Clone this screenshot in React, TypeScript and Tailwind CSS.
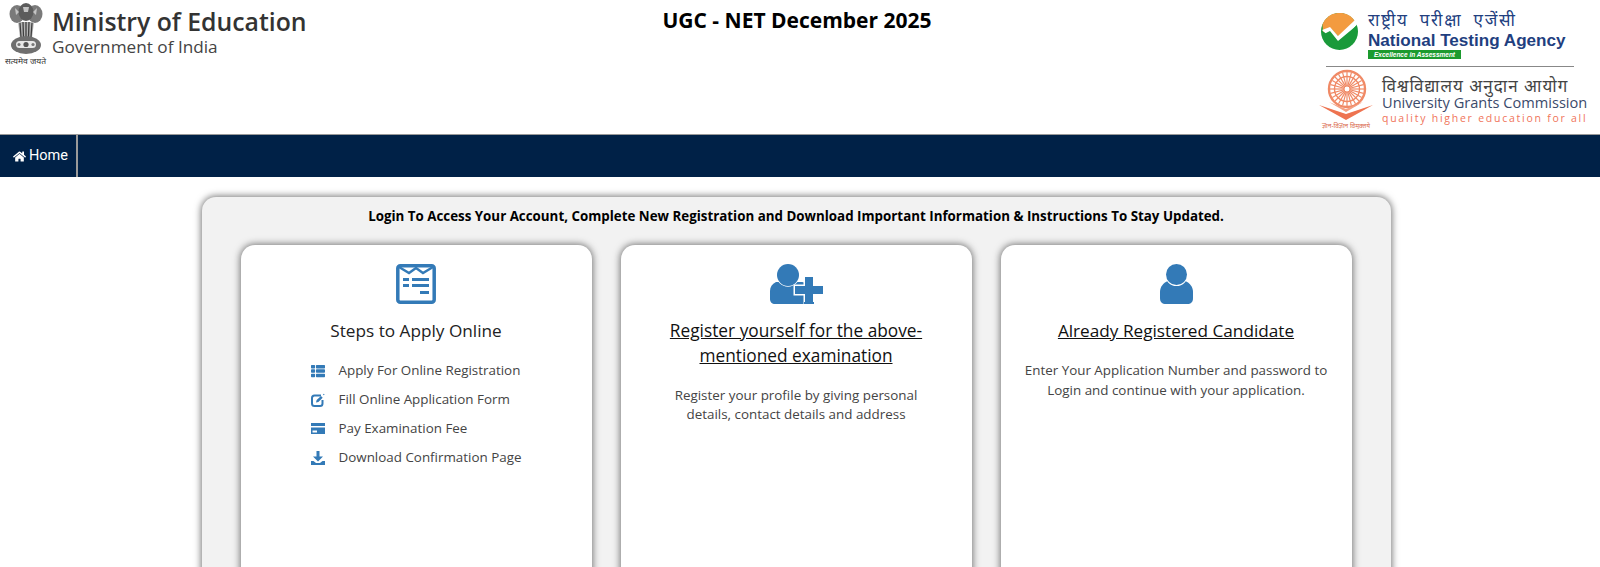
import React from "react";
import { FaHome, FaThList } from "react-icons/fa";

const openSans = "font-['Open_Sans',sans-serif]";
const hindi = "font-['Noto_Sans_Devanagari','Noto_Sans','Lohit_Devanagari',sans-serif]";

function Emblem() {
  return (
    <svg width="34" height="52" viewBox="0 0 34 52" className="block">
      <g fill="#7a7a7a">
        <ellipse cx="8" cy="11" rx="7.5" ry="9" />
        <ellipse cx="26" cy="11" rx="7.5" ry="9" />
        <ellipse cx="17" cy="9" rx="7.5" ry="9" fill="#5c5c5c" />
        <path d="M6 5l4 4-3 3zM28 5l-4 4 3 3zM14 4h6l-1 5h-4z" fill="#c4c4c4" />
        <path d="M9 19h16l-2 16H11Z" fill="#b5b5b5" />
        <path d="M11 20l1 14M14 19l.5 15M17 19v15M20 19l-.5 15M23 20l-1 14" stroke="#3f3f3f" strokeWidth="1.3" />
        <ellipse cx="17" cy="42" rx="15" ry="9" fill="#6f6f6f" />
        <rect x="7" y="38" width="20" height="7" rx="3.5" fill="#e8e8e8" />
        <circle cx="17" cy="41.5" r="2.6" fill="#555" />
        <circle cx="10" cy="41.5" r="1.6" fill="#777" />
        <circle cx="24" cy="41.5" r="1.6" fill="#777" />
      </g>
    </svg>
  );
}

function NtaLogo() {
  return (
    <svg width="37" height="37" viewBox="0 0 37 37" className="block shrink-0">
      <circle cx="18.5" cy="18.5" r="18.5" fill="#1a9a3a" />
      <path d="M1.4 11.5A18.5 18.5 0 0 1 34.5 9L18 24 10.5 16 2 19Z" fill="#f39b3f" />
      <path d="M1 17l8-3 8 9L34 7l2.4 4L18 33Z" fill="#fff" />
      <path d="M3 21l6-3 8 10L35 13c-1 10-8 22-16.500 22C10 35 4 29 3 21Z" fill="#1a9a3a" />
    </svg>
  );
}

function UgcLogo() {
  const spokes = Array.from({ length: 24 }, (_, i) => (i * 360) / 24);
  return (
    <svg width="54" height="60" viewBox="0 0 54 60" className="block shrink-0">
      <g fill="none" stroke="#f08a66">
        <circle cx="28" cy="20" r="18" strokeWidth="2.4" />
        <circle cx="28" cy="20" r="12.500" strokeWidth="1.4" />
        {spokes.map((a) => (
          <line key={a} x1="28" y1="3" x2="28" y2="17" strokeWidth="1.2" transform={`rotate(${a} 28 20)`} />
        ))}
      </g>
      <circle cx="28" cy="20" r="3" fill="#fff" stroke="#f08a66" />
      <path d="M0 36l27 9 27-9-27 15Z" fill="#ee7350" />
      <path d="M10 33l17 7 17-7-17 10Z" fill="#f4a083" />
      <text x="27" y="58.500" textAnchor="middle" fontSize="6.5" fill="#d9694c" fontFamily="'Noto Sans',sans-serif">ज्ञान-विज्ञान विमुक्तये</text>
    </svg>
  );
}

function StepsIcon() {
  return (
    <svg width="40" height="40" viewBox="0 0 40 40" className="block">
      <rect x="1.800" y="1.800" width="36.400" height="36.400" rx="2.500" fill="none" stroke="#337ab7" strokeWidth="3.500" />
      <path d="M3 3l10 6 7-5 7 5 10-6" fill="none" stroke="#337ab7" strokeWidth="2.400" />
      <g fill="#337ab7">
        <rect x="7" y="14" width="6" height="3" />
        <rect x="16" y="14" width="17" height="3" />
        <rect x="7" y="20" width="6" height="3" />
        <rect x="16" y="20" width="17" height="3" />
        <rect x="24" y="27" width="9" height="3" />
      </g>
    </svg>
  );
}

function UserPlusIcon() {
  return (
    <svg width="53" height="40" viewBox="0 0 53 40" className="block">
      <path d="M6 18h26c4 0 7 4 7 9v13H5c-3 0-5-2-5-5v-8c0-4 2-7 6-9Z" fill="#337ab7" />
      <circle cx="18" cy="11" r="11" fill="#337ab7" stroke="#fff" strokeWidth="1.500" paintOrder="stroke" />
      <path d="M35 13h8v9h10v8H43v10h-8V30H25v-8h10Z" fill="#337ab7" stroke="#fff" strokeWidth="3" paintOrder="stroke" />
      <path d="M34 40h10v-2h-10Z" fill="#337ab7" />
    </svg>
  );
}

function UserIcon() {
  return (
    <svg width="33" height="40" viewBox="0 0 33 40" className="block">
      <path d="M8 17h17c5 2 8 6 8 11v6c0 4-2 6-6 6H6c-4 0-6-2-6-6v-6c0-5 3-9 8-11Z" fill="#337ab7" />
      <circle cx="16.500" cy="10.500" r="10.500" fill="#337ab7" stroke="#fff" strokeWidth="2" paintOrder="stroke" />
    </svg>
  );
}

function EditIcon() {
  return (
    <svg width="14" height="14" viewBox="0 0 14 14" className="block">
      <path d="M10 2.500H3.500C2 2.500 1 3.500 1 5v5.500C1 12 2 13 3.500 13H9c1.500 0 2.500-1 2.500-2.500V7" fill="none" stroke="#337ab7" strokeWidth="2" />
      <path d="M5 9.500l.6-2.400L10 3l1.700 1.700L7.400 8.900Z" fill="#337ab7" />
      <path d="M12 1.500l.8-.8.8.8-.8.8Z" fill="#337ab7" />
    </svg>
  );
}

function CardIcon() {
  return (
    <svg width="14" height="11" viewBox="0 0 14 11" className="block">
      <path d="M0 0h14v3H0Z" fill="#337ab7" />
      <path d="M0 4.500h14V11H0Zm1.500 3V9.500h4.500V7.500Z" fill="#337ab7" fillRule="evenodd" />
    </svg>
  );
}

function DownloadIcon() {
  return (
    <svg width="14" height="14" viewBox="0 0 14 14" className="block">
      <path d="M5.500 0h3v5.500H12L7 10.500 2 5.500h3.500Z" fill="#337ab7" />
      <path d="M0 10h2.500l2.500 2h4l2.500-2H14v4H0Z" fill="#337ab7" />
    </svg>
  );
}

const steps = [
  { icon: <FaThList />, label: "Apply For Online Registration" },
  { icon: <EditIcon />, label: "Fill Online Application Form" },
  { icon: <CardIcon />, label: "Pay Examination Fee" },
  { icon: <DownloadIcon />, label: "Download Confirmation Page" },
];

function Card({ icon, children }: { icon: React.ReactNode; children: React.ReactNode }) {
  return (
    <div className="bg-white rounded-[14px] shadow-[0_0_7px_1px_#777] h-[420px] pt-[19px] px-5 flex flex-col items-center text-center">
      <div className="h-10 flex justify-center">{icon}</div>
      {children}
    </div>
  );
}

export default function App() {
  return (
    <div className={`h-screen overflow-hidden bg-white ${openSans}`}>
      <header className="h-[134px] flex">
        <div className="w-[330px] flex pl-1 pt-[3px]">
          <div className="w-[43px] flex flex-col items-center">
            <Emblem />
            <span className={`mt-[2px] text-[8.500px] leading-[9px] text-[#333] whitespace-nowrap ${hindi}`}>सत्यमेव जयते</span>
          </div>
          <div className="pl-[5px] pt-[3px]">
            <div className="text-[24.800px] leading-[31px] font-semibold text-[#333]">Ministry of Education</div>
            <div className="text-[17.200px] leading-[20px] text-[#444]">Government of India</div>
          </div>
        </div>
        <h1 className="flex-1 text-center text-[21px] leading-[28px] pt-[6px] font-bold text-black">UGC - NET December 2025</h1>
        <div className="w-[336px] pl-[57px] pt-[13px]">
          <div className="flex gap-[10px] h-[50px]">
            <NtaLogo />
            <div>
              <div className={`pt-[2px] text-[17px] leading-[15px] tracking-[1.700px] [word-spacing:5px] text-[#22407f] whitespace-nowrap ${hindi}`}>राष्ट्रीय परीक्षा एजेंसी</div>
              <div className="font-['Liberation_Sans',sans-serif] font-bold text-[17.100px] leading-[21px] text-[#1f3f7f]">National Testing Agency</div>
              <div className="font-['Liberation_Sans',sans-serif] -mt-px w-[93px] h-[9px] bg-[#1c9a2e] text-white text-[6.500px] leading-[9px] italic font-bold text-center">Excellence in Assessment</div>
            </div>
          </div>
          <div className="mt-[3px] ml-[5px] w-[248px] h-px bg-[#888]" />
          <div className="flex gap-[9px] -ml-[2px] mt-[2px]">
            <UgcLogo />
            <div className="pt-[15px]">
              <div className={`text-[17px] leading-[9px] tracking-[1px] text-[#444] whitespace-nowrap ${hindi}`}>विश्वविद्यालय अनुदान आयोग</div>
              <div className="text-[14.600px] leading-[18px] text-[#3b4a6b] whitespace-nowrap">University Grants Commission</div>
              <div className="text-[10.500px] leading-[14px] tracking-[1.750px] font-medium text-[#f0745a] whitespace-nowrap">quality higher education for all</div>
            </div>
          </div>
        </div>
      </header>

      <nav className="h-[43px] bg-[#002147] flex border-t border-t-[#999]">
        <a className="flex items-center gap-[3px] pl-[13px] pr-2 border-r-2 border-r-[#9a9a9a] text-white text-[14.500px] font-['Roboto',sans-serif]">
          <FaHome className="text-[13px]" />
          Home
        </a>
      </nav>

      <main className="pt-5 pr-2 flex justify-center">
        <section className="w-[1189px] bg-[#f2f2f2] rounded-[14px] shadow-[0_0_7px_1px_#777] px-[39px] pt-[10px]">
          <p className="text-[13.350px] leading-[18px] font-bold text-black text-center">
            Login To Access Your Account, Complete New Registration and Download Important Information &amp; Instructions To Stay Updated.
          </p>
          <div className="grid grid-cols-3 gap-[29px] mt-5">
            <Card icon={<StepsIcon />}>
              <h2 className="mt-[14px] text-[17.200px] leading-[25px] font-normal text-[#222]">Steps to Apply Online</h2>
              <ul className="mt-[13px] self-start pl-[50px] text-[13.400px] text-[#444]">
                {steps.map((s) => (
                  <li key={s.label} className="h-[29px] flex items-center">
                    <span className="w-[28px] text-[14px] text-[#337ab7] flex">{s.icon}</span>
                    {s.label}
                  </li>
                ))}
              </ul>
            </Card>
            <Card icon={<UserPlusIcon />}>
              <h2 className="mt-[14px] text-[17.300px] leading-[25px] font-normal text-[#111] underline">
                Register yourself for the above-mentioned examination
              </h2>
              <p className="mt-[18px] text-[13.400px] leading-[19px] text-[#444] px-5">
                Register your profile by giving personal details, contact details and address
              </p>
            </Card>
            <Card icon={<UserIcon />}>
              <h2 className="mt-[14px] text-[17.200px] leading-[25px] font-normal text-[#111] underline">Already Registered Candidate</h2>
              <p className="mt-[17px] text-[13.400px] leading-[20px] text-[#444]">
                Enter Your Application Number and password to Login and continue with your application.
              </p>
            </Card>
          </div>
        </section>
      </main>
    </div>
  );
}
